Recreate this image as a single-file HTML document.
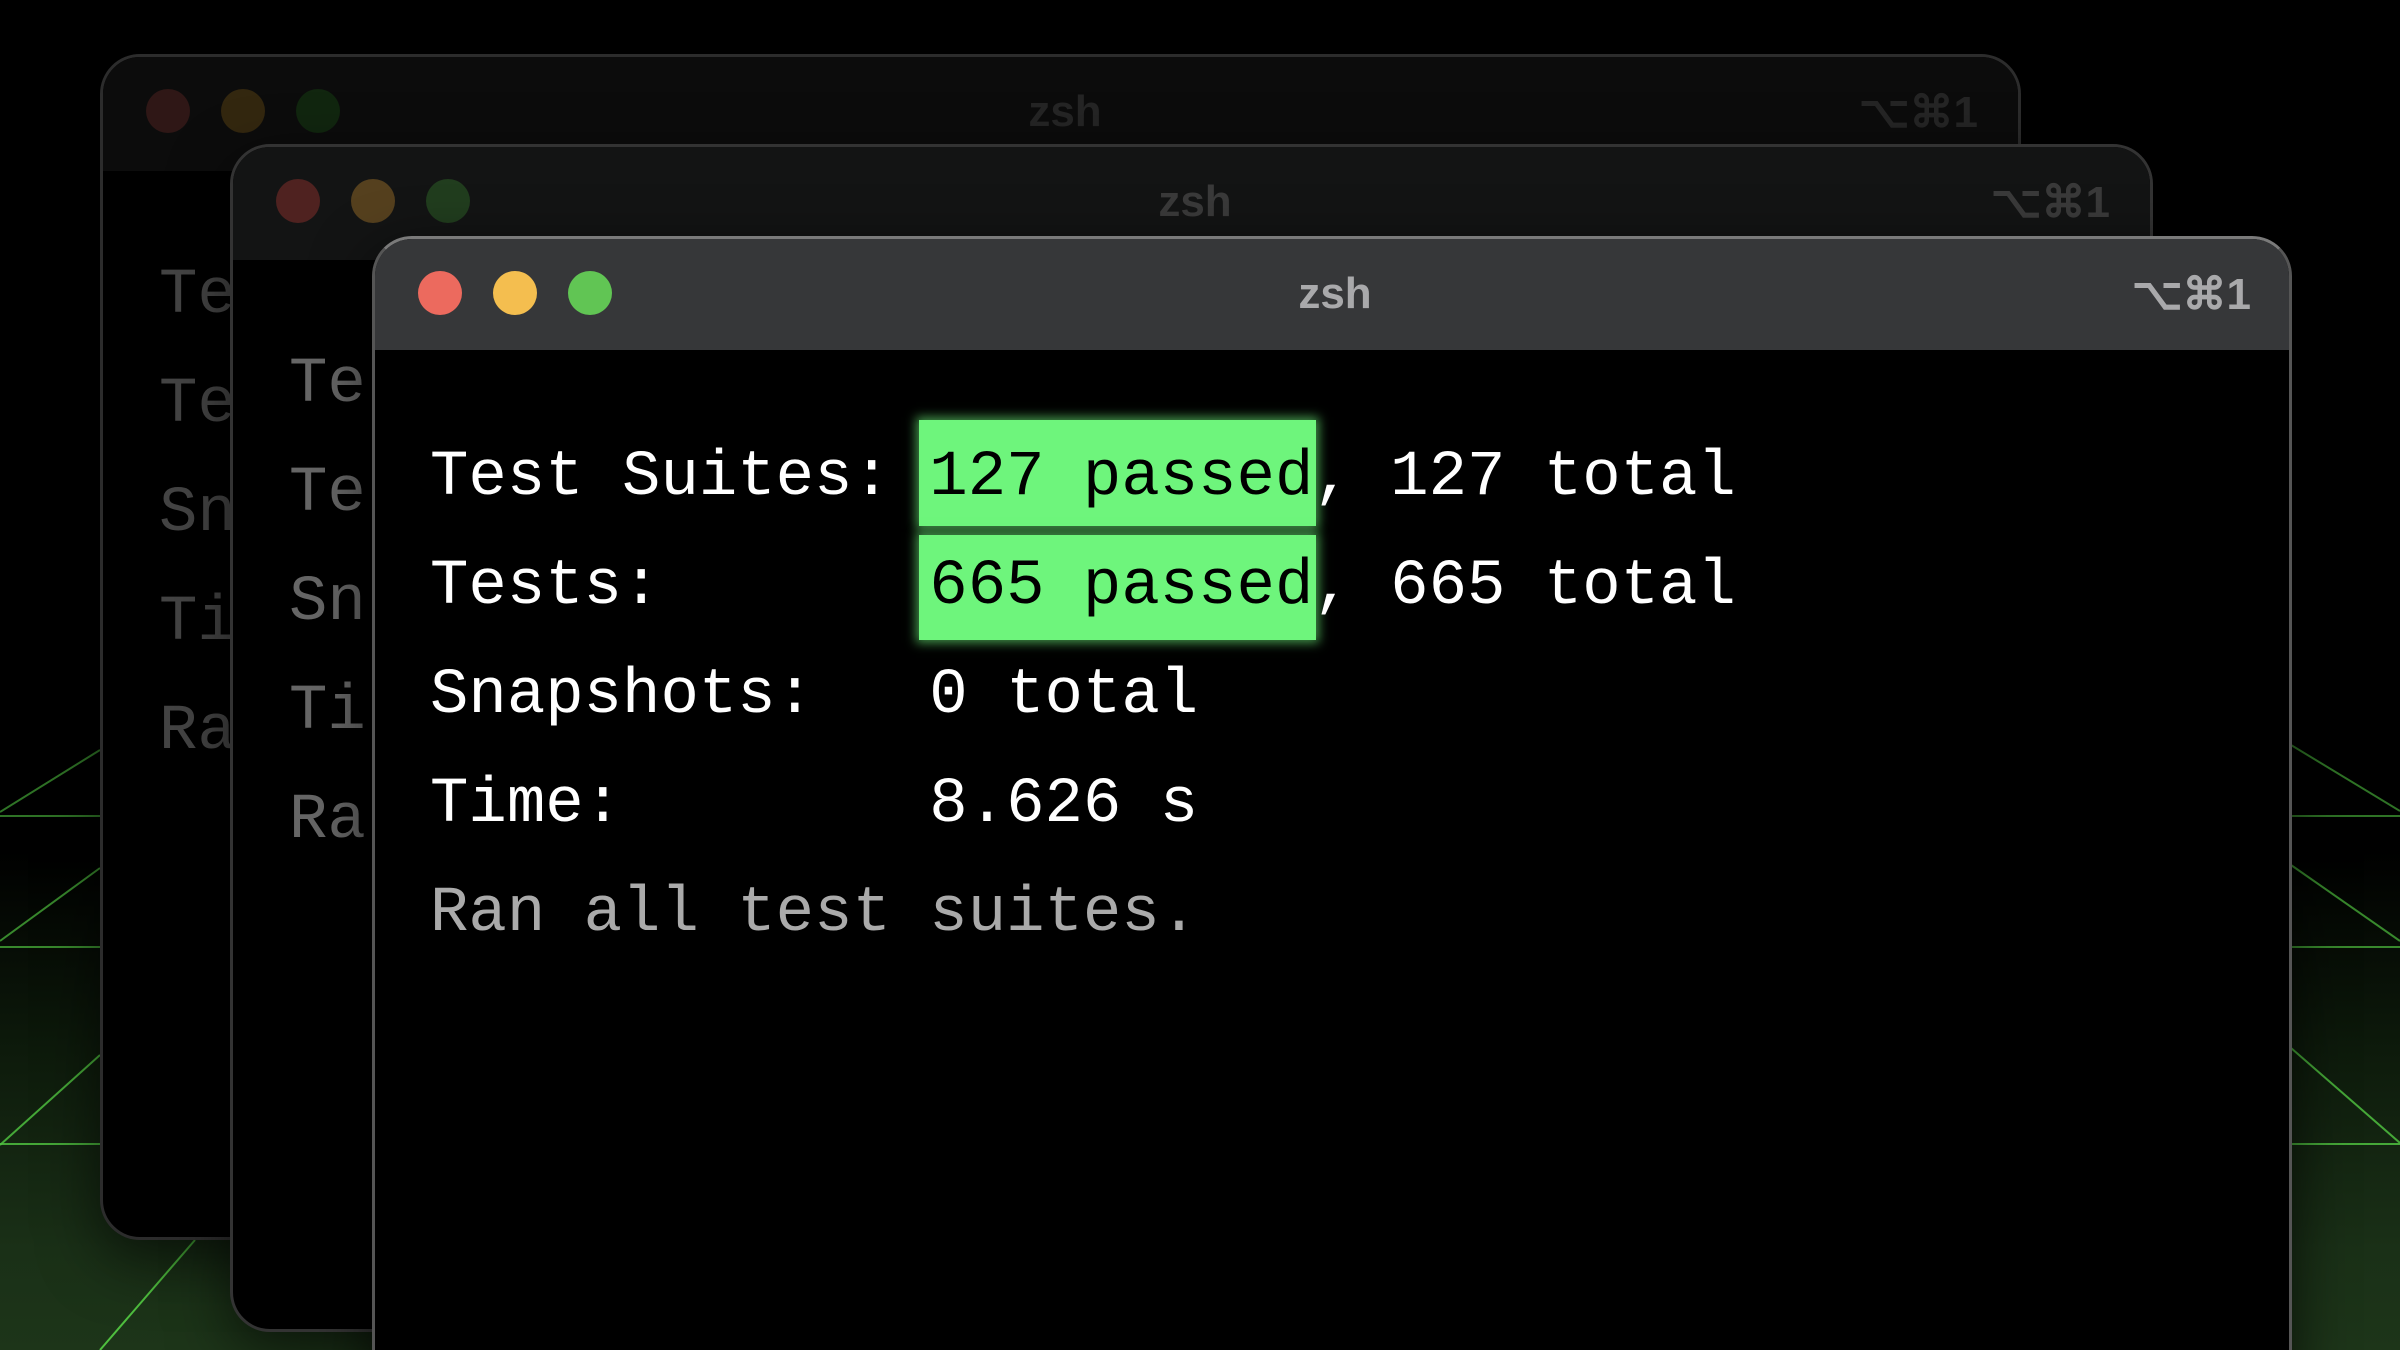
<!DOCTYPE html>
<html><head><meta charset="utf-8"><style>
html,body{margin:0;padding:0;width:2400px;height:1350px;overflow:hidden;background:#000}
body{position:relative;font-family:"Liberation Sans",sans-serif}
.bg{position:absolute;left:0;top:0;width:2400px;height:1350px;background:linear-gradient(to bottom,#000 0px,#000 850px,#0d1a0b 1050px,#1a3017 1250px,#1d3519 1350px)}
.win{position:absolute;border-radius:40px 40px 40px 40px;overflow:hidden;background:#000;box-sizing:border-box}
.tb{position:absolute;left:0;right:0;top:0}
.dot{position:absolute;width:44px;height:44px;border-radius:50%}
.title{position:absolute;font-weight:bold;font-size:44px;transform:translateX(-50%)}
.sc{position:absolute;font-weight:bold;font-size:44px;right:40px}
.mono{position:absolute;font-family:"Liberation Mono","DejaVu Sans Mono",monospace;font-size:64px;white-space:pre;line-height:1}
</style></head><body>
<div class="bg"></div>
<svg width="2400" height="1350" style="position:absolute;left:0;top:0">
<g stroke="#4fbf3f" stroke-width="2" fill="none">
<line x1="0" y1="812" x2="100" y2="750" stroke-opacity=".6"/>
<line x1="0" y1="816" x2="100" y2="816" stroke-opacity=".6"/>
<line x1="0" y1="941" x2="100" y2="868" stroke-opacity=".7"/>
<line x1="0" y1="947" x2="100" y2="947" stroke-opacity=".7"/>
<line x1="0" y1="1145" x2="100" y2="1055" stroke-opacity=".85"/>
<line x1="0" y1="1144" x2="100" y2="1144" stroke-opacity=".85"/>
<line x1="100" y1="1350" x2="195" y2="1240"/>
<line x1="2291" y1="745" x2="2400" y2="811" stroke-opacity=".6"/>
<line x1="2291" y1="816" x2="2400" y2="816" stroke-opacity=".6"/>
<line x1="2291" y1="865" x2="2400" y2="941" stroke-opacity=".7"/>
<line x1="2291" y1="947" x2="2400" y2="947" stroke-opacity=".7"/>
<line x1="2291" y1="1048" x2="2400" y2="1143" stroke-opacity=".85"/>
<line x1="2291" y1="1144" x2="2400" y2="1144" stroke-opacity=".85"/>
</g></svg>

<!-- back window 1 -->
<div class="win" style="left:100px;top:54px;width:1921px;height:1186px;border:3px solid #2c2c2c;box-shadow:0 20px 60px rgba(0,0,0,.6)">
 <div class="tb" style="height:114px;background:#0c0c0c">
  <div class="dot" style="left:43px;top:32px;background:#2f1716"></div>
  <div class="dot" style="left:118px;top:32px;background:#33270f"></div>
  <div class="dot" style="left:193px;top:32px;background:#11260f"></div>
  <div class="title" style="left:962px;top:30px;color:#252525">zsh</div>
  <div class="sc" style="top:30px;color:#252525">⌥⌘1</div>
 </div>
 <div class="mono" style="left:56px;top:185px;color:#444;line-height:109px">Te
Te
Sn
Ti
Ra</div>
</div>

<!-- back window 2 -->
<div class="win" style="left:230px;top:144px;width:1923px;height:1188px;border:3px solid #333;box-shadow:0 20px 60px rgba(0,0,0,.6)">
 <div class="tb" style="height:113px;background:#131414">
  <div class="dot" style="left:43px;top:32px;background:#4f2220"></div>
  <div class="dot" style="left:118px;top:32px;background:#55401e"></div>
  <div class="dot" style="left:193px;top:32px;background:#213d1e"></div>
  <div class="title" style="left:962px;top:30px;color:#3a3a3a">zsh</div>
  <div class="sc" style="top:30px;color:#3a3a3a">⌥⌘1</div>
 </div>
 <div class="mono" style="left:56px;top:184px;color:#666;line-height:109px">Te
Te
Sn
Ti
Ra</div>
</div>

<!-- front window -->
<div class="win" style="left:372px;top:236px;width:1920px;height:1160px;border:3px solid #555;border-top-color:#7a7a7a;box-shadow:0 20px 60px rgba(0,0,0,.7)">
 <div class="tb" style="height:111px;background:#363739">
  <div class="dot" style="left:43px;top:32px;background:#ec6a5e"></div>
  <div class="dot" style="left:118px;top:32px;background:#f4be4f"></div>
  <div class="dot" style="left:193px;top:32px;background:#61c554"></div>
  <div class="title" style="left:960px;top:30px;color:#a9a9ab">zsh</div>
  <div class="sc" style="top:30px;right:38px;color:#a9a9ab">⌥⌘1</div>
 </div>
 <div style="position:absolute;left:544px;top:181px;width:397px;height:106px;background:#6ef57c;box-shadow:0 0 10px 3px rgba(110,245,124,.6)"></div>
 <div style="position:absolute;left:544px;top:296px;width:397px;height:105px;background:#6ef57c;box-shadow:0 0 10px 3px rgba(110,245,124,.6)"></div>
 <div class="mono" style="left:55px;top:185px;color:#fff;line-height:109px">Test Suites: <span style="color:#000">127 passed</span>, 127 total
Tests:       <span style="color:#000">665 passed</span>, 665 total
Snapshots:   0 total
Time:        8.626 s
<span style="color:#aaa">Ran all test suites.</span></div>
</div>
</body></html>
